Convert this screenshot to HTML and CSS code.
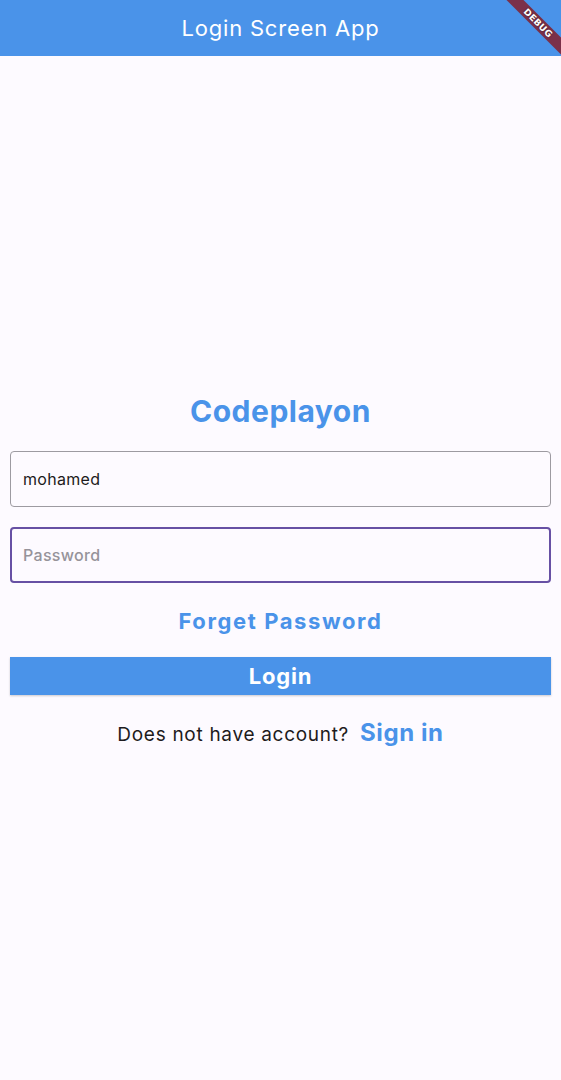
FILE: index.html
```html
<!DOCTYPE html>
<html>
<head>
<meta charset="utf-8">
<link rel="stylesheet" href="styles.css">
</head>
<body>
<div class="app">
  <header class="appbar">
    <h1 class="appbar-title">Login Screen App</h1>
  </header>
  <div class="debug-banner">DEBUG</div>
  <main class="content">
    <div class="form">
      <h2 class="brand">Codeplayon</h2>
      <div class="field">
        <span class="field-value">mohamed</span>
      </div>
      <div class="field field-focused">
        <span class="field-hint">Password</span>
      </div>
      <div class="forget">Forget Password</div>
      <div class="login-btn">Login</div>
      <div class="signup-row">
        <span class="signup-text">Does not have account?</span>
        <span class="signup-link">Sign in</span>
      </div>
    </div>
  </main>
</div>
</body>
</html>
```

FILE: styles.css
```css
* { box-sizing: border-box; }
html, body { margin: 0; padding: 0; }
body {
  width: 561px;
  height: 1080px;
  background: #fdfaff;
  font-family: Inter, Roboto, "Liberation Sans", sans-serif;
  overflow: hidden;
}
.app {
  position: relative;
  width: 561px;
  height: 1080px;
  overflow: hidden;
  display: flex;
  flex-direction: column;
}
.appbar {
  height: 56px;
  background: #4a93e9;
  display: flex;
  align-items: center;
  justify-content: center;
  flex-shrink: 0;
}
.appbar-title {
  margin: 0;
  font-family: Inter, Roboto, "Liberation Sans", sans-serif;
  font-weight: 400;
  font-size: 22px;
  color: #ffffff;
  letter-spacing: 0.8px;
}
.debug-banner {
  position: absolute;
  left: 478px;
  top: 17px;
  width: 120px;
  height: 12px;
  background: #7b3049;
  color: #fff;
  font-family: "DejaVu Sans", sans-serif;
  font-weight: 700;
  font-size: 9px;
  line-height: 12px;
  text-align: center;
  letter-spacing: 0.3px;
  transform: rotate(45deg);
  text-shadow: 0 0 2px rgba(0,0,0,0.5);
}
.content {
  flex: 1;
  display: flex;
  align-items: center;
  justify-content: center;
  padding: 0 10px;
}
.form {
  width: 100%;
  display: flex;
  flex-direction: column;
  align-items: stretch;
  margin-top: 3px;
}
.brand {
  margin: 0 0 22px 0;
  text-align: center;
  font-size: 30px;
  font-weight: 700;
  color: #4a93e9;
  line-height: 36px;
  letter-spacing: 0.5px;
}
.field {
  height: 56px;
  border: 1px solid #9d9aa1;
  border-radius: 4px;
  display: flex;
  align-items: center;
  padding: 0 12px;
  font-size: 16px;
  letter-spacing: 0.3px;
}
.field + .field { margin-top: 20px; }
.field-value { color: #1d1b20; }
.field-focused {
  border: 2px solid #6750a4;
  padding: 0 11px;
}
.field-hint { color: #96939a; font-weight: 500; }
.forget {
  margin-top: 24px;
  text-align: center;
  font-size: 22px;
  font-weight: 700;
  color: #4a93e9;
  line-height: 28px;
  letter-spacing: 1.6px;
}
.login-btn {
  margin-top: 22px;
  height: 38px;
  background: #4a93e9;
  color: #fff;
  font-size: 22px;
  font-weight: 700;
  letter-spacing: 0.8px;
  display: flex;
  align-items: center;
  justify-content: center;
  box-shadow: 0 1px 2px rgba(0,0,0,0.2);
}
.signup-row {
  margin-top: 23px;
  display: flex;
  justify-content: center;
  align-items: baseline;
  gap: 11px;
}
.signup-text {
  font-size: 19px;
  color: #1d1b20;
  letter-spacing: 0.7px;
}
.signup-link {
  font-size: 24px;
  font-weight: 700;
  color: #4a93e9;
  letter-spacing: 0.6px;
}
```
